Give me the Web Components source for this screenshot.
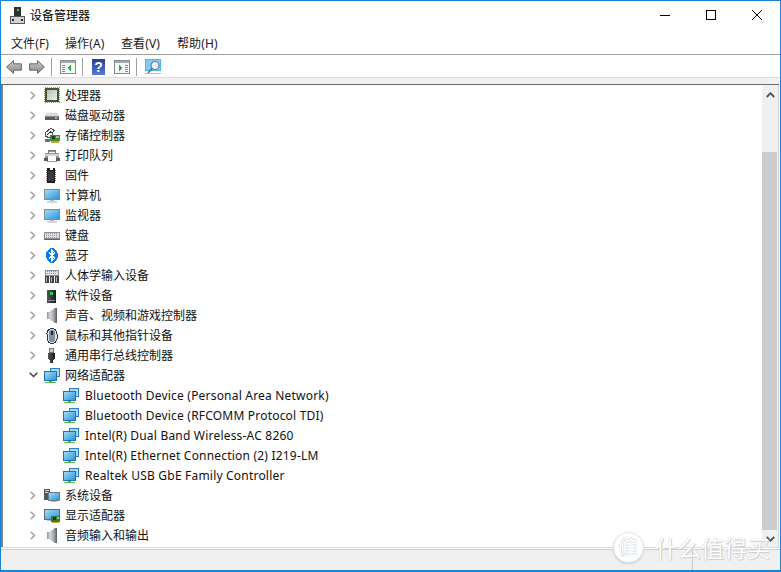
<!DOCTYPE html>
<html lang="zh">
<head>
<meta charset="utf-8">
<title>设备管理器</title>
<style>
  html, body { margin: 0; padding: 0; background: #fff; }
  body { font: 12px "Noto Sans", "Noto Sans CJK SC", sans-serif; color: #000; }
</style>
</head>
<body>
<dm-window>
  <dm-titlebar slot="title">设备管理器</dm-titlebar>
  <dm-menubar slot="menu">
    <span>文件(F)</span><span>操作(A)</span><span>查看(V)</span><span>帮助(H)</span>
  </dm-menubar>
  <dm-toolbar slot="tools"></dm-toolbar>
  <dm-tree slot="tree">
    <dm-row icon="cpu">处理器</dm-row>
    <dm-row icon="disk">磁盘驱动器</dm-row>
    <dm-row icon="storage">存储控制器</dm-row>
    <dm-row icon="printer">打印队列</dm-row>
    <dm-row icon="chip">固件</dm-row>
    <dm-row icon="monitor">计算机</dm-row>
    <dm-row icon="monitor">监视器</dm-row>
    <dm-row icon="keyboard">键盘</dm-row>
    <dm-row icon="bluetooth">蓝牙</dm-row>
    <dm-row icon="hid">人体学输入设备</dm-row>
    <dm-row icon="software">软件设备</dm-row>
    <dm-row icon="speaker">声音、视频和游戏控制器</dm-row>
    <dm-row icon="mouse">鼠标和其他指针设备</dm-row>
    <dm-row icon="usb">通用串行总线控制器</dm-row>
    <dm-row icon="network" open>网络适配器</dm-row>
    <dm-row icon="network" child>Bluetooth Device (Personal Area Network)</dm-row>
    <dm-row icon="network" child>Bluetooth Device (RFCOMM Protocol TDI)</dm-row>
    <dm-row icon="network" child>Intel(R) Dual Band Wireless-AC 8260</dm-row>
    <dm-row icon="network" child>Intel(R) Ethernet Connection (2) I219-LM</dm-row>
    <dm-row icon="network" child>Realtek USB GbE Family Controller</dm-row>
    <dm-row icon="system">系统设备</dm-row>
    <dm-row icon="display">显示适配器</dm-row>
    <dm-row icon="speaker">音频输入和输出</dm-row>
  </dm-tree>
  <dm-scrollbar slot="scroll"></dm-scrollbar>
  <dm-statusbar slot="status"></dm-statusbar>
  <dm-watermark slot="mark"></dm-watermark>
</dm-window>

<script>
// 图标都画在 16x16 的格子里
const defs = `
  <linearGradient id="sc" x1="0" y1="0" x2="1" y2="1"><stop offset="0" stop-color="#9fdcf8"/><stop offset="1" stop-color="#2f93d8"/></linearGradient>
  <linearGradient id="spk" x1="0" y1="0" x2="1" y2="0"><stop offset="0" stop-color="#8d9094"/><stop offset=".3" stop-color="#d6d8da"/><stop offset=".7" stop-color="#a2a5a9"/><stop offset="1" stop-color="#55585c"/></linearGradient>
  <linearGradient id="blk" x1="0" y1="0" x2="1" y2="0"><stop offset="0" stop-color="#555"/><stop offset="1" stop-color="#1c1c1c"/></linearGradient>
  <linearGradient id="core" x1="0" y1="0" x2="1" y2="1"><stop offset="0" stop-color="#b9bfb4"/><stop offset="1" stop-color="#eef0ec"/></linearGradient>`;
const ICONS = {
  cpu: `<rect x="0.5" y="0.5" width="15" height="15" fill="none" stroke="#b79a3c" stroke-dasharray="1 1"/><rect x="1" y="1" width="14" height="14" fill="#3f5b2c"/><rect x="3" y="3" width="10" height="10" fill="url(#core)"/>`,
  disk: `<path d="M3 5h10l2 4H1z" fill="#dcdcdc"/><path d="M3 5h10v1H3z" fill="#f2f2f2"/><rect x="1" y="9" width="14" height="4" fill="#5a5b5e"/><rect x="1" y="9" width="14" height="1" fill="#8b8c8f"/><rect x="11" y="10" width="2" height="2" fill="#7ed957"/>`,
  storage: `<path d="M1 6l6-5 3 2.5-2 2.5 1 2-3 3-5-2z" fill="#f0f0f0" stroke="#4e4e4e"/><path d="M3 8l3.5-3 2 1.5" fill="none" stroke="#222"/><rect x="6" y="8" width="10" height="6" fill="#3f8a4a"/><rect x="8" y="9" width="3" height="3" fill="#17401f"/><rect x="12" y="9" width="3" height="2" fill="#a5c76a"/><rect x="7" y="14" width="8" height="2" fill="#c9a227"/><rect x="1" y="12" width="5" height="3" fill="#6d6d6d"/>`,
  printer: `<rect x="4.5" y="3.5" width="7" height="3" fill="#fff" stroke="#777"/><path d="M1 6h14v6H1z" fill="#8c8f94"/><rect x="1" y="7" width="14" height="2" fill="#d4d6d9"/><rect x="4" y="9" width="8" height="5" fill="#fff"/><rect x="0" y="11" width="4" height="3" fill="#55585c"/><rect x="12" y="11" width="4" height="3" fill="#55585c"/><rect x="5" y="4" width="6" height="1" fill="#58a6dc"/><rect x="3" y="14" width="10" height="1" fill="#9a9a9a"/>`,
  chip: `<path d="M3 1h2.5v1.5h3V1H11v15H3z" fill="#1f1f1f"/><path d="M2 3h1M2 5h1M2 7h1M2 9h1M2 11h1M2 13h1M11 3h1M11 5h1M11 7h1M11 9h1M11 11h1M11 13h1" stroke="#7a7a7a"/><rect x="4" y="4" width="6" height="10" fill="#3a3a3a"/>`,
  monitor: `<rect x="0" y="2" width="16" height="11" fill="#7e8c9a"/><rect x="1" y="3" width="14" height="9" fill="url(#sc)"/><rect x="6" y="13" width="4" height="1" fill="#b5bcc4"/><rect x="3" y="14" width="10" height="1.5" fill="#d2d6da"/>`,
  keyboard: `<rect x="0" y="5" width="16" height="8" fill="#8f9297"/><rect x="1" y="6" width="14" height="5" fill="#dfe1e4"/><path d="M2 6.5h12M2 8.5h12M2 10.5h12" stroke="#8f9297" stroke-dasharray="1 1"/><rect x="0" y="12" width="16" height="1" fill="#5f6165"/>`,
  bluetooth: `<ellipse cx="8" cy="8.5" rx="6" ry="7.5" fill="#0a7ce6"/><path d="M5.2 5.8l5.6 5.2-2.8 2.8V3.2l2.8 2.8-5.6 5.2" fill="none" stroke="#fff" stroke-width="1.1"/>`,
  hid: `<rect x="1" y="3" width="14" height="6" fill="#8f9297"/><rect x="2" y="4" width="12" height="4" fill="#dfe1e4"/><path d="M3 4.5h10M3 6.5h10" stroke="#8f9297" stroke-dasharray="1 1"/><path d="M1 9h4v7H1zM6 9h4v7H6zM11 9h4v7h-4z" fill="#3e4146"/><path d="M2 10h1v5H2zM7 10h1v5H7zM12 10h1v5h-1z" fill="#b0b4b9"/>`,
  software: `<rect x="3" y="3" width="9" height="13" fill="url(#blk)"/><rect x="6" y="5" width="3" height="3" fill="#22d04a"/><rect x="4" y="13" width="7" height="1" fill="#8a8a8a"/>`,
  speaker: `<path d="M3 5h2l6-4h2v15h-2l-6-4H3z" fill="url(#spk)"/>`,
  mouse: `<rect x="3" y="1.5" width="10" height="15" rx="5" fill="#dce1e8" stroke="#2f3236"/><rect x="5" y="3" width="6" height="12" rx="3" fill="#7f8ea0"/><rect x="7" y="4" width="2" height="4" rx="1" fill="#23262a"/>`,
  usb: `<rect x="5.5" y="1.5" width="4" height="4" fill="#c9ccd0" stroke="#777"/><path d="M4 6h7v6l-2 1v3H6v-3l-2-1z" fill="url(#blk)"/>`,
  network: `<rect x="6" y="1" width="10" height="9" fill="#2a7fc4"/><rect x="7" y="2" width="8" height="7" fill="#a9d8f5"/><rect x="0" y="4" width="13" height="10" fill="#1f6fb2"/><rect x="1" y="5" width="11" height="8" fill="url(#sc)"/><rect x="5" y="14" width="3" height="1" fill="#4caf3c"/><rect x="1" y="15" width="11" height="1" fill="#58b947"/>`,
  system: `<rect x="0" y="2" width="6" height="11" fill="#54585d"/><rect x="1" y="3" width="4" height="1" fill="#d0d3d6"/><rect x="1" y="5" width="4" height="1" fill="#d0d3d6"/><rect x="4" y="5" width="12" height="9" fill="#6e7a86"/><rect x="5" y="6" width="10" height="7" fill="url(#sc)"/><rect x="7" y="14" width="6" height="1" fill="#b5bcc4"/>`,
  display: `<rect x="0" y="2" width="16" height="11" fill="#5e6a76"/><rect x="1" y="3" width="14" height="9" fill="url(#sc)"/><rect x="7" y="9" width="9" height="6" fill="#2f7a3c"/><rect x="9" y="10" width="3" height="3" fill="#17401f"/><rect x="13" y="10" width="2" height="2" fill="#9ccc65"/><rect x="8" y="15" width="7" height="1" fill="#d4a72c"/><rect x="3" y="13" width="4" height="1" fill="#b5bcc4"/>`
};

function svgIcon(name, size = 16) {
  return `<svg width="${size}" height="${size + 1}" viewBox="0 0 16 17" shape-rendering="crispEdges"><defs>${defs}</defs>${ICONS[name]}</svg>`;
}

class DmWindow extends HTMLElement {
  constructor() {
    super();
    this.attachShadow({ mode: 'open' }).innerHTML = `
      <style>
        :host { display: grid; position: relative; box-sizing: border-box; width: 781px; height: 572px;
          border: 1px solid #1883d7; border-bottom-width: 2px; grid-template-columns: 1fr 18px;
          grid-template-rows: 29px 25px 23px 7px 1fr 23px; overflow: hidden; background: #fff; }
        .title, .menu, .tools, .status { grid-column: 1 / 3; display: block; }
        .strip { grid-column: 1 / 3; background: #f0f0f0; border-bottom: 1px solid #696969; margin-right: 1px; box-sizing: border-box; }
      </style>
      <div class="title"><slot name="title"></slot></div>
      <div class="menu"><slot name="menu"></slot></div>
      <div class="tools"><slot name="tools"></slot></div>
      <div class="strip"></div>
      <slot name="tree"></slot>
      <slot name="scroll"></slot>
      <div class="status"><slot name="status"></slot></div>
      <slot name="mark"></slot>`;
  }
}

class DmTitlebar extends HTMLElement {
  constructor() {
    super();
    this.attachShadow({ mode: 'open' }).innerHTML = `
      <style>
        :host { display: flex; align-items: center; height: 29px; padding-left: 9px; box-sizing: border-box; }
        .txt { margin-left: 5px; margin-top: -2px; flex: 1; font-size: 12px; }
        .btn { width: 46px; height: 28px; margin-bottom: 1px; display: flex; align-items: center; justify-content: center; }
        svg { display: block; }
      </style>
      <svg width="15" height="17" viewBox="0 0 15 17" shape-rendering="crispEdges">
        <rect x="4" y="0" width="7" height="9" fill="#2f2f2f"/><rect x="7" y="2" width="2" height="2" fill="#22d04a"/>
        <rect x="0" y="9" width="15" height="8" fill="#55585c"/><rect x="1" y="10" width="13" height="6" fill="#d2d4d7"/>
        <rect x="2" y="12" width="2" height="2" fill="#2c2c2c"/><rect x="11" y="12" width="2" height="2" fill="#2c2c2c"/>
      </svg>
      <span class="txt"><slot></slot></span>
      <div class="btn"><svg width="10" height="10" shape-rendering="crispEdges"><rect x="0" y="5" width="10" height="1" fill="#000"/></svg></div>
      <div class="btn"><svg width="10" height="10"><rect x="0.5" y="0.5" width="9" height="9" fill="none" stroke="#000"/></svg></div>
      <div class="btn"><svg width="10" height="10"><path d="M0 0L10 10M10 0L0 10" stroke="#000" stroke-width="1"/></svg></div>`;
  }
}

class DmMenubar extends HTMLElement {
  constructor() {
    super();
    this.attachShadow({ mode: 'open' }).innerHTML = `
      <style>
        :host { display: grid; grid-template-columns: 54px 56px 56px 56px; height: 25px; box-sizing: border-box; padding: 1px 0 0 10px;
          align-items: center; border-bottom: 1px solid #a0a0a0; font-size: 12px; color: #1a1a1a; letter-spacing: .12px; }
      </style>
      <slot></slot>`;
  }
}

class DmToolbar extends HTMLElement {
  constructor() {
    super();
    const winFrame = (inner) => `<svg width="16" height="14" viewBox="0 0 16 14" shape-rendering="crispEdges"><rect x="0.5" y="0.5" width="15" height="13" fill="#f7f9f9" stroke="#858b91"/><rect x="1" y="1" width="14" height="2" fill="#a3a9af"/>${inner}</svg>`;
    const lines = (x) => `<path d="M${x} 5.5h3M${x} 7.5h3M${x} 9.5h3M${x} 11.5h3" stroke="#5f93bd"/>`;
    const arrow = (flip) => `<svg width="16" height="14" viewBox="0 0 16 14" style="${flip ? 'transform:scaleX(-1)' : ''}"><defs><linearGradient id="ag" x1="0" y1="0" x2="0" y2="1"><stop offset="0" stop-color="#c8c8c8"/><stop offset="1" stop-color="#8a8a8a"/></linearGradient></defs><path d="M0.6 7L7.5 0.6V3.8H15.4V10.2H7.5V13.4z" fill="url(#ag)" stroke="#6a6a6a"/></svg>`;
    this.attachShadow({ mode: 'open' }).innerHTML = `
      <style>
        :host { display: flex; align-items: center; height: 23px; padding: 2px 0 0 5px; box-sizing: border-box; border-bottom: 1px solid #dfdfdf; }
        svg { display: block; flex: none; }
        .sep { width: 1px; height: 18px; background: #a0a0a0; flex: none; }
      </style>
      ${arrow(false)}
      <div style="width:7px"></div>
      ${arrow(true)}
      <div style="width:6px"></div><div class="sep"></div><div style="width:8px"></div>
      ${winFrame(lines(2) + '<path d="M11 5v6L7 8z" fill="#2fae4a"/>')}
      <div style="width:6px"></div><div class="sep"></div><div style="width:9px"></div>
      <svg width="13" height="16" viewBox="0 0 13 16"><defs><linearGradient id="hg" x1="0" y1="0" x2="0" y2="1"><stop offset="0" stop-color="#2a3a98"/><stop offset="1" stop-color="#5a7ad6"/></linearGradient></defs><rect width="13" height="16" fill="url(#hg)"/><text x="6.5" y="13" font-family="Liberation Sans" font-size="14" font-weight="700" text-anchor="middle" fill="#fff">?</text></svg>
      <div style="width:9px"></div>
      ${winFrame(lines(11) + '<path d="M5 5v6l4-3z" fill="#2fae4a"/>')}
      <div style="width:6px"></div><div class="sep"></div><div style="width:8px"></div>
      <svg width="16" height="16" viewBox="0 0 16 16"><rect x="0" y="0" width="16" height="12" fill="#4fb2e8"/><rect x="1" y="1" width="14" height="10" fill="#7fcdf3"/><circle cx="10" cy="6.5" r="4" fill="#e4f4fb" stroke="#6f7a84" stroke-width="1.2"/><path d="M7 9.5L3 14" stroke="#5f6870" stroke-width="1.6"/><rect x="0" y="14" width="16" height="1" fill="#b8bec3"/></svg>`;
  }
}

class DmTree extends HTMLElement {
  constructor() {
    super();
    this.attachShadow({ mode: 'open' }).innerHTML = `
      <style>
        :host { display: block; overflow: hidden; border-left: 2px solid #808080; background: #fff; }
      </style>
      <slot></slot>`;
  }
}

class DmRow extends HTMLElement {
  constructor() {
    super();
    this.attachShadow({ mode: 'open' });
  }
  connectedCallback() {
    const child = this.hasAttribute('child');
    const open = this.hasAttribute('open');
    const chevron = child ? '' : open
      ? `<svg width="9" height="6" viewBox="0 0 9 6"><path d="M0.7 0.7L4.5 4.5L8.3 0.7" fill="none" stroke="#404040" stroke-width="1.5"/></svg>`
      : `<svg width="6" height="9" viewBox="0 0 6 9"><path d="M0.7 0.7L4.5 4.5L0.7 8.3" fill="none" stroke="#a0a0a0" stroke-width="1.5"/></svg>`;
    this.shadowRoot.innerHTML = `
      <style>
        :host { display: flex; align-items: center; height: 20px; white-space: nowrap; font-size: 12px; color: #111; }
        :host([child]) { letter-spacing: .2px; }
        .arrow { width: 10px; margin-left: 25px; margin-right: 6px; display: flex; justify-content: center; }
        :host([child]) .arrow { margin-left: 60px; margin-right: 0; width: 0; }
        svg { display: block; }
        .ico { display: block; height: 17px; margin-top: 1px; }
        .txt { margin-left: 5px; }
        :host([child]) .txt { margin-left: 6px; }
      </style>
      <span class="arrow">${chevron}</span>
      <span class="ico">${svgIcon(this.getAttribute('icon'))}</span>
      <span class="txt"><slot></slot></span>`;
  }
}

class DmScrollbar extends HTMLElement {
  constructor() {
    super();
    this.attachShadow({ mode: 'open' }).innerHTML = `
      <style>
        :host { display: grid; grid-template-rows: 20px 47px 1fr 17px; width: 16px; background: #f0f0f0; margin-right: 1px; border-right: 1px solid #d4d4d4; }
        .b { display: flex; align-items: center; justify-content: center; }
        .thumb { background: #cdcdcd; grid-row: 3; margin-right: 1px; }
      </style>
      <div class="b"><svg width="9" height="6" viewBox="0 0 9 6"><path d="M0.8 5L4.5 1.2L8.2 5" fill="none" stroke="#505050" stroke-width="1.8"/></svg></div>
      <div></div>
      <div class="thumb"></div>
      <div class="b"><svg width="9" height="6" viewBox="0 0 9 6"><path d="M0.8 1L4.5 4.8L8.2 1" fill="none" stroke="#505050" stroke-width="1.8"/></svg></div>`;
  }
}

class DmStatusbar extends HTMLElement {
  constructor() {
    super();
    this.attachShadow({ mode: 'open' }).innerHTML = `
      <style>
        :host { display: block; height: 23px; box-sizing: border-box; border-top: 1px solid #dcdcdc; background: #fff; padding-top: 1px; }
        .in { display: grid; grid-template-columns: 691px 1fr; height: 100%; background: #f0f0f0; border-top: 1px solid #d0d0d0; box-sizing: border-box; }
        .in div + div { border-left: 1px solid #c8c8c8; }
      </style>
      <div class="in"><div></div><div></div></div>`;
  }
}

class DmWatermark extends HTMLElement {
  constructor() {
    super();
    this.attachShadow({ mode: 'open' }).innerHTML = `
      <style>
        :host { position: absolute; left: 612px; top: 528px; display: flex; align-items: center; gap: 11px; color: #fff;
          font: 23px/36px "Noto Sans CJK SC", sans-serif; text-shadow: 0 0 1px #b8b8b8, 1px 1px 1px #d0d0d0; white-space: nowrap; }
        .c { width: 29px; height: 29px; border-radius: 50%; background: #fff; box-shadow: 0 1px 2px #ccc; border: 1px solid #e6e6e6;
          display: flex; align-items: center; justify-content: center; font-size: 20px; color: #fff; text-shadow: 0 0 1px #999; }
      </style>
      <span class="c">值</span><span>什么值得买</span>`;
  }
}

customElements.define('dm-window', DmWindow);
customElements.define('dm-titlebar', DmTitlebar);
customElements.define('dm-menubar', DmMenubar);
customElements.define('dm-toolbar', DmToolbar);
customElements.define('dm-tree', DmTree);
customElements.define('dm-row', DmRow);
customElements.define('dm-scrollbar', DmScrollbar);
customElements.define('dm-statusbar', DmStatusbar);
customElements.define('dm-watermark', DmWatermark);
</script>
</body>
</html>
